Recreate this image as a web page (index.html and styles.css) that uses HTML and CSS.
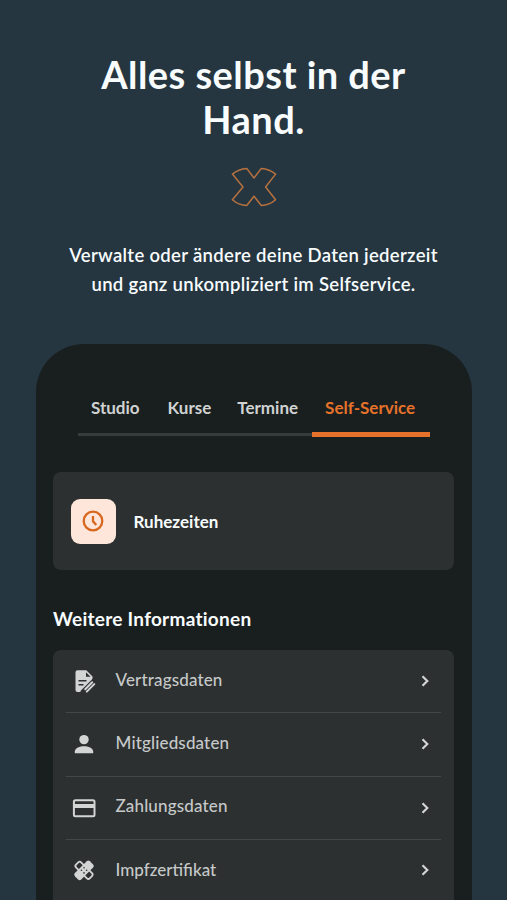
FILE: index.html
```html
<!DOCTYPE html>
<html lang="de">
<head>
<meta charset="utf-8">
<title>Self-Service</title>
<link rel="stylesheet" href="styles.css">
</head>
<body>
<header class="intro">
  <h1 class="title">Alles selbst in der<br>Hand.</h1>
  <svg class="mark" viewBox="0 0 48 42" width="48" height="42" aria-hidden="true">
    <path d="M16.7 2.4 24 12l7.300-9.600Q39.500 3 45.600 8.100L35.600 21l10 12.700Q39.500 39 31.300 39.500L24 30.200l-7.300 9.300Q8.500 39 2.400 33.700L13 21 2.400 8.100Q8.500 3 16.700 2.400Z"/>
  </svg>
  <p class="lead">Verwalte oder ändere deine Daten jederzeit<br>und ganz unkompliziert im Selfservice.</p>
</header>
<main class="phone">
  <nav class="tabs">
    <span class="tab">Studio</span>
    <span class="tab">Kurse</span>
    <span class="tab">Termine</span>
    <span class="tab active">Self-Service</span>
  </nav>
  <section class="card">
    <span class="badge">
      <svg viewBox="0 0 24 24" width="24" height="24" aria-hidden="true"><circle cx="12" cy="12" r="9.300"/><path d="M12 7v5.200l3.300 3.800"/></svg>
    </span>
    <span class="card-label">Ruhezeiten</span>
  </section>
  <h2 class="subtitle">Weitere Informationen</h2>
  <ul class="list">
    <li class="row">
      <svg class="icon" viewBox="0 0 24 24" aria-hidden="true">
        <path fill="#d3d4d4" d="M5.500 1.200h8.800l6.200 6.200v4L10 22v1H5.500a2 2 0 0 1-2-2V3.200a2 2 0 0 1 2-2Z"/>
        <path fill="#2c3030" d="M14 3.200 18.500 7.800H14Z"/>
        <path fill="none" stroke="#2c3030" stroke-width="1.500" d="M6.500 11.800h8M6.500 15.800h5"/>
        <path fill="none" stroke="#2c3030" stroke-width="6.500" d="m10.500 24.500 13-13"/>
        <path fill="none" stroke="#d3d4d4" stroke-width="2" stroke-linecap="round" d="m13.200 20.200 7-7"/>
        <path fill="none" stroke="#d3d4d4" stroke-width="2" stroke-linecap="round" d="m14.800 22.600 7.500-7.500"/>
      </svg>
      <span class="label">Vertragsdaten</span>
      <svg class="chevron" viewBox="0 0 8 12" aria-hidden="true"><path d="m1.500 1.200 4.800 4.800-4.800 4.800"/></svg>
    </li>
    <li class="row">
      <svg class="icon" viewBox="0 0 24 24" aria-hidden="true">
        <g fill="#d3d4d4"><circle cx="12" cy="7.600" r="4.700"/><path d="M2.800 21.300v-1.800c0-3.300 5.200-5.200 9.200-5.200s9.200 1.900 9.200 5.200v1.800Z"/></g>
      </svg>
      <span class="label">Mitgliedsdaten</span>
      <svg class="chevron" viewBox="0 0 8 12" aria-hidden="true"><path d="m1.500 1.200 4.800 4.800-4.800 4.800"/></svg>
    </li>
    <li class="row">
      <svg class="icon" viewBox="0 0 24 24" aria-hidden="true">
        <rect x="1.900" y="4.200" width="20.600" height="16" rx="1.500" fill="none" stroke="#d3d4d4" stroke-width="2"/><path fill="#d3d4d4" d="M2 8h20v4H2z"/>
      </svg>
      <span class="label">Zahlungsdaten</span>
      <svg class="chevron" viewBox="0 0 8 12" aria-hidden="true"><path d="m1.500 1.200 4.800 4.800-4.800 4.800"/></svg>
    </li>
    <li class="row">
      <svg class="icon" viewBox="0 0 24 24" aria-hidden="true">
        <g transform="translate(12 12.300) rotate(45) scale(.9)">
          <rect x="-10.800" y="-4" width="21.600" height="8" rx="2.200" fill="none" stroke="#d3d4d4" stroke-width="2"/>
          <rect x="-5" y="-11.800" width="10" height="23.600" rx="2.500" fill="#d3d4d4"/>
        </g>
        <g fill="#2c3030"><circle cx="12" cy="9.700" r=".8"/><circle cx="12" cy="14.900" r=".8"/><circle cx="9.400" cy="12.300" r=".8"/><circle cx="14.600" cy="12.300" r=".8"/></g>
      </svg>
      <span class="label">Impfzertifikat</span>
      <svg class="chevron" viewBox="0 0 8 12" aria-hidden="true"><path d="m1.500 1.200 4.800 4.800-4.800 4.800"/></svg>
    </li>
  </ul>
</main>
</body>
</html>
```
FILE: styles.css
```css
* { box-sizing: border-box; }

body {
  margin: 0;
  height: 900px;
  overflow: hidden;
  background: #253641;
  font-family: Lato, sans-serif;
  color: #f8fcfd;
}

.intro {
  display: flex;
  flex-direction: column;
  align-items: center;
  height: 344px;
  padding-top: 52px;
  text-align: center;
}

.title {
  margin: 0;
  font-size: 38px;
  font-weight: 700;
  line-height: 45px;
  letter-spacing: 0.45px;
}

.mark {
  margin-top: 24px;
  fill: none;
  stroke: #b7713f;
  stroke-width: 1.5;
  stroke-linejoin: round;
}

.lead {
  margin: 33px 0 0;
  font-size: 18.5px;
  font-weight: 600;
  line-height: 28.5px;
  letter-spacing: 0.32px;
}

.phone {
  width: 436px;
  height: 556px;
  margin-left: 36px;
  padding: 48px 18px 0 17px;
  overflow: hidden;
  border-radius: 48px 48px 0 0;
  background: #191f1f;
}

.tabs {
  display: flex;
  gap: 26px;
  width: 352px;
  height: 45px;
  margin-left: 25px;
  padding-left: 13px;
  background: linear-gradient(#373b3b, #373b3b) 0 41px / 100% 3px no-repeat;
  color: #d0d2d2;
  font-size: 17px;
  font-weight: 700;
  line-height: 32px;
}

.tab:first-child { margin-right: 2px; }

.active {
  flex: none;
  width: 118px;
  margin-left: -12px;
  padding-left: 13px;
  border-bottom: 5px solid #e5722a;
  color: #e5722a;
}

.card {
  display: flex;
  align-items: center;
  height: 98px;
  margin-top: 35px;
  padding-left: 17.5px;
  border-radius: 8px;
  background: #2c3030;
}

.badge {
  display: grid;
  place-items: center;
  width: 45px;
  height: 45px;
  border-radius: 9px;
  background: #fee7da;
}

.badge svg {
  fill: none;
  stroke: #d8681f;
  stroke-width: 2.3;
}

.card-label {
  margin-left: 18px;
  font-size: 17px;
  font-weight: 700;
}

.subtitle {
  margin: 34px 0 0;
  font-size: 19px;
  font-weight: 700;
  line-height: 30px;
  letter-spacing: 0.26px;
}

.list {
  margin: 16px 0 0;
  padding: 0 13px;
  list-style: none;
  border-radius: 8px 8px 0 0;
  background: #2c3030;
}

.row {
  display: flex;
  align-items: center;
  height: 63.3px;
  padding: 0 12px 0 6px;
  border-bottom: 1px solid #434747;
}

.row:last-child { border-bottom: 0; }

.icon {
  width: 24px;
  height: 24px;
}

.label {
  flex: 1;
  margin-left: 19.5px;
  padding-bottom: 4px;
  color: #c6c9c9;
  font-size: 17px;
  font-weight: 500;
  letter-spacing: 0.15px;
}

.row:last-child .label { letter-spacing: 0; }

.chevron {
  width: 8px;
  height: 12px;
  fill: none;
  stroke: #d3d4d4;
  stroke-width: 2.2;
}

.row:last-child .icon,
.row:last-child .chevron { margin-bottom: 3px; }
```
